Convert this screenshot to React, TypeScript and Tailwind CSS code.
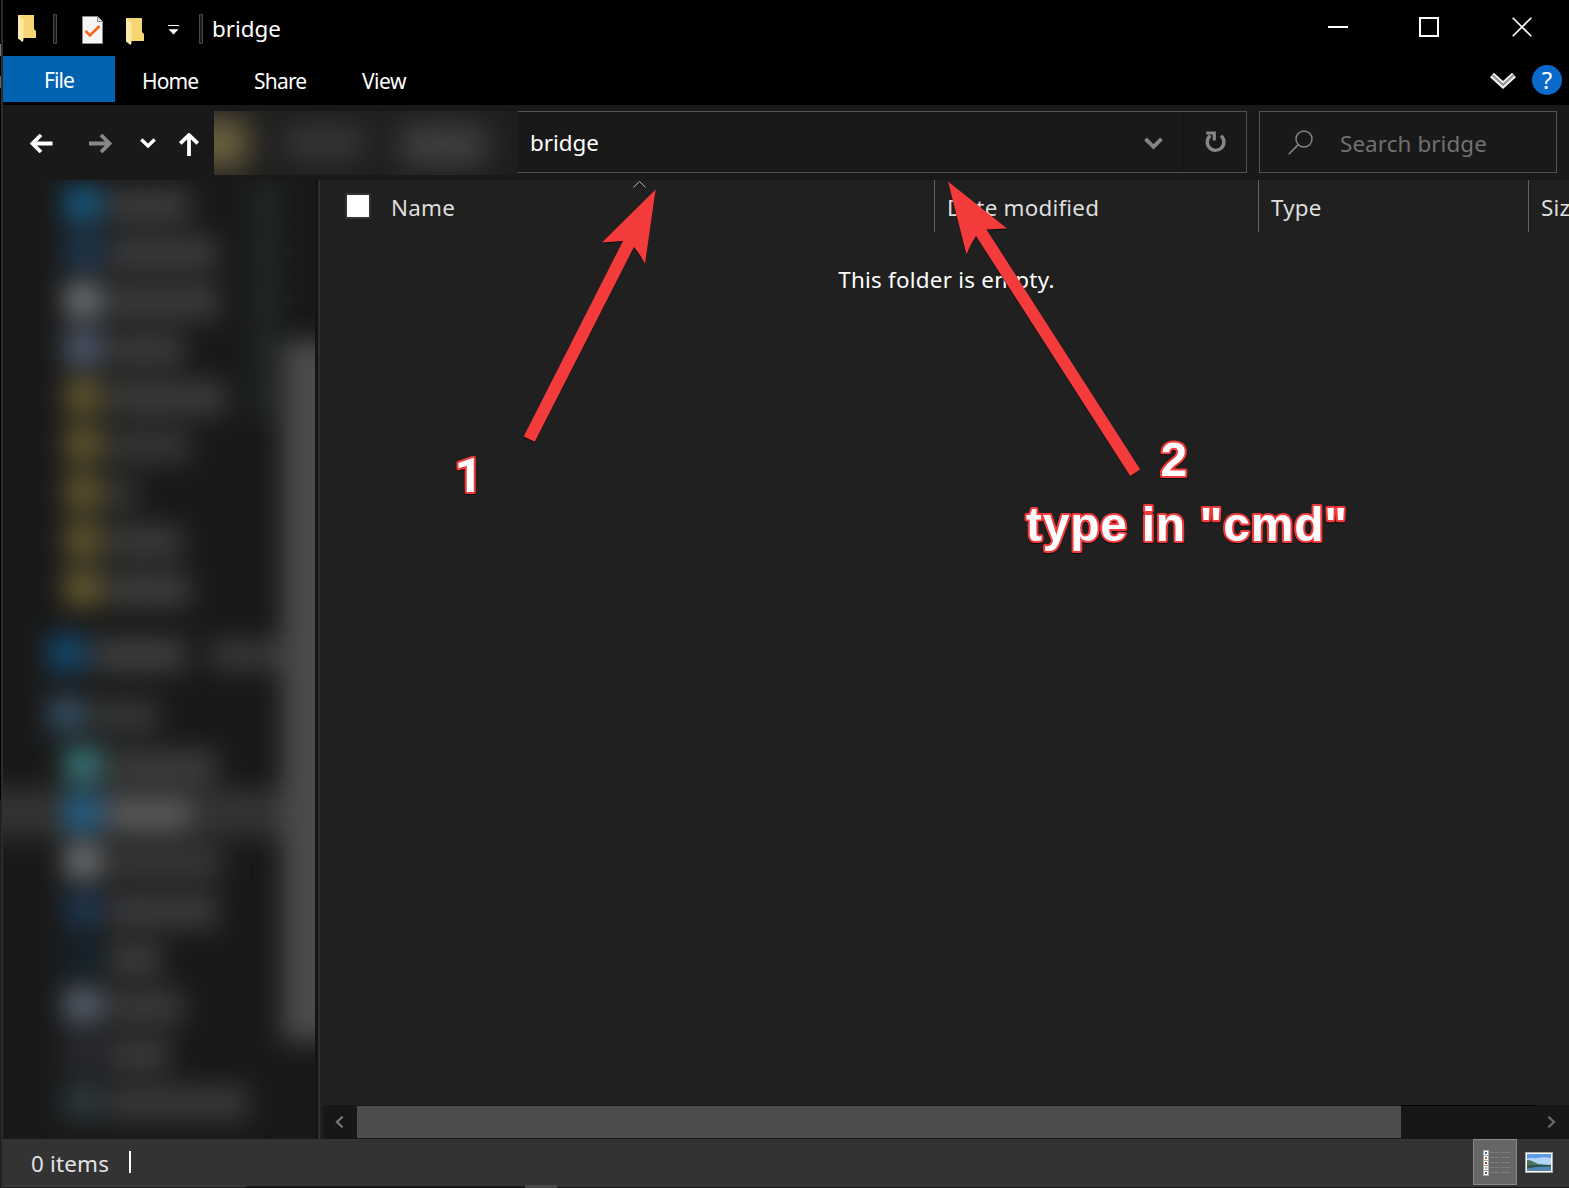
import React from "react";

type Row = { icon: string; text: string; pin?: boolean; indent?: boolean; selected?: boolean; gap?: string };

const ROWS: Row[] = [
  { icon: "bg-[#17587e]", text: "w-[82px] bg-[#3c3c3c]", pin: true },
  { icon: "bg-[#1e384f]", text: "w-[110px] bg-[#3b3b3b]", pin: true },
  { icon: "bg-[#6b7074]", text: "w-[112px] bg-[#3b3b3b]", pin: true },
  { icon: "bg-[#4d586c]", text: "w-[76px] bg-[#3a3a3a]", pin: true },
  { icon: "bg-[#62552f]", text: "w-[118px] bg-[#3b3b3b]", pin: true },
  { icon: "bg-[#62552f]", text: "w-[82px] bg-[#353535]" },
  { icon: "bg-[#62552f]", text: "w-[28px] bg-[#363636]" },
  { icon: "bg-[#62552f]", text: "w-[74px] bg-[#3a3a3a]" },
  { icon: "bg-[#665930]", text: "w-[82px] bg-[#3d3d3d]" },
  { icon: "bg-[#144a70]", text: "w-[94px] bg-[#3e3e3e]", indent: true, gap: "mt-[17px]" },
  { icon: "bg-[#344d60]", text: "w-[66px] bg-[#363636]", indent: true, gap: "mt-[13px]" },
  { icon: "bg-[#387377]", text: "w-[108px] bg-[#3c3c3c]", gap: "mt-[3px]" },
  { icon: "bg-[#235f88]", text: "w-[82px] bg-[#595959]", selected: true },
  { icon: "bg-[#6b6e70]", text: "w-[114px] bg-[#373737]" },
  { icon: "bg-[#1e3750]", text: "w-[110px] bg-[#3b3b3b]" },
  { icon: "bg-[#14242e]", text: "w-[54px] bg-[#3b3b3b]" },
  { icon: "bg-[#57606f]", text: "w-[76px] bg-[#3a3a3a]" },
  { icon: "bg-[#292b33]", text: "w-[62px] bg-[#3a3a3a]" },
  { icon: "bg-[#2e3a3e]", text: "w-[140px] bg-[#393939]" },
];

const Folder = () => (
  <svg width="20" height="28" viewBox="0 0 20 28">
    <path d="M1 0H17V14L19 16V23H5L1 22Z" fill="#f6d673" />
    <path d="M1 0L6.5 4.5V25L5.5 27L1 23.5Z" fill="#ffe9a6" />
  </svg>
);

const Separator = () => <div className="h-[30px] w-1 rounded-[1px] border border-[#4a4a4a] bg-[#1a1a1a]" />;

function TitleBar() {
  return (
    <div className="flex h-14 bg-black">
      <div className="flex items-center">
        <div className="ml-3.5 w-5 pt-px"><Folder /></div>
        <div className="ml-4 pt-0.5"><Separator /></div>
        <svg className="mt-1 ml-[25px]" width="21" height="28" viewBox="0 0 21 28">
          <path d="M.5 .5H15.5L20.5 5.5V27.5H.5Z" fill="#f5f5f7" stroke="#8c8c8c" />
          <path d="M15.5 .5V5.5H20.5" fill="#ddd" stroke="#8c8c8c" />
          <path d="M3.5 15L8 19.5L17.5 10" fill="none" stroke="#f9661b" strokeWidth="2.6" />
        </svg>
        <div className="mt-[7px] ml-[22px] w-5"><Folder /></div>
        <svg className="mt-[3px] ml-[23px]" width="11" height="10" viewBox="0 0 11 10">
          <path d="M0 .5H11" stroke="#fff" />
          <path d="M.5 4.3H10.5L5.5 9.6Z" fill="#fff" />
        </svg>
        <div className="ml-5 pt-0.5"><Separator /></div>
        <span className="mt-0.5 ml-[9px] text-[22.4px] text-white">bridge</span>
      </div>
      <div className="ml-auto flex items-center pb-0.5">
        <svg className="mr-[71px]" width="20" height="20"><path d="M0 10H20" stroke="#fff" strokeWidth="2" /></svg>
        <svg className="mr-[73px]" width="20" height="20"><rect x="1" y="1" width="18" height="18" fill="none" stroke="#fff" strokeWidth="2" /></svg>
        <svg className="mr-[37px]" width="20" height="20"><path d="M.7 .7L19.3 19.3M19.3 .7L.7 19.3" stroke="#fff" strokeWidth="1.6" /></svg>
      </div>
    </div>
  );
}

function Ribbon() {
  return (
    <div className="flex h-[49px] bg-black text-[21px] tracking-[-0.9px] text-white">
      <div className="flex h-[46px] w-28 items-center justify-center bg-[#0063b1] pt-[3px]">File</div>
      <div className="flex items-center pt-0.5">
        <span className="ml-[27px] w-[56px]">Home</span>
        <span className="ml-[56px] w-[54px] tracking-[-0.8px]">Share</span>
        <span className="ml-[54px] tracking-[-0.5px]">View</span>
      </div>
      <div className="ml-auto flex items-center pr-[7px]">
        <svg width="26" height="17" viewBox="0 0 26 17">
          <path d="M2 3L13 13L24 3" fill="none" stroke="#f4f4f4" strokeWidth="5.8" />
          <path d="M2.5 3.3L13 12.9L23.5 3.3" fill="none" stroke="#969696" strokeWidth="2.2" />
        </svg>
        <div className="mb-0.5 ml-4 flex size-[30px] items-center justify-center rounded-full bg-[#0a6acb] text-[24px] tracking-normal">?</div>
      </div>
    </div>
  );
}

function AddressBar() {
  return (
    <div className="flex h-[75px] bg-[#191919] pt-1.5">
      <div className="flex h-[64px] w-[211px] items-center">
        <svg className="ml-[27px]" width="23" height="19" viewBox="0 0 23 19">
          <path d="M2 9.5H22.5M11 1L2.5 9.5L11 18" fill="none" stroke="#fff" strokeWidth="3.8" />
        </svg>
        <svg className="ml-9" width="23" height="19" viewBox="0 0 23 19">
          <path d="M0 9.5H21M12 1L20.5 9.5L12 18" fill="none" stroke="#878787" strokeWidth="3.8" />
        </svg>
        <svg className="ml-7" width="16" height="11" viewBox="0 0 16 11">
          <path d="M1.3 1.5L8 8L14.7 1.5" fill="none" stroke="#fff" strokeWidth="3.4" />
        </svg>
        <svg className="mt-0.5 ml-[23px]" width="20" height="23" viewBox="0 0 20 23">
          <path d="M10 23V2M1.3 10.5L10 2L18.7 10.5" fill="none" stroke="#fff" strokeWidth="3.8" />
        </svg>
      </div>
      <div className="h-[64px] w-[304px] overflow-hidden bg-[#1e1e1e]">
        <div className="-ml-8 flex h-full items-center blur-[15px]">
          <div className="h-[50px] w-[66px] bg-[#6d6040]" />
          <div className="ml-9 h-[34px] w-[80px] bg-[#383838]" />
          <div className="mt-1 ml-9 h-[40px] w-[86px] bg-[#414141]" />
        </div>
      </div>
      <div className="flex h-[62px] w-[729px] items-center border border-l-0 border-[#535353] text-white">
        <span className="mt-0.5 ml-3 text-[22.4px]">bridge</span>
        <svg className="mt-0.5 ml-auto" width="19" height="13" viewBox="0 0 19 13">
          <path d="M1.5 1.8L9.5 9.8L17.5 1.8" fill="none" stroke="#858585" strokeWidth="3.8" />
        </svg>
        <div className="ml-5 h-full w-px bg-[#141414]" />
        <svg className="mr-5 ml-[21px]" width="21" height="22" viewBox="0 0 21 22">
          <path d="M16 4.8A8.3 8.3 0 1 1 5.4 4.6" fill="none" stroke="#878787" strokeWidth="3.4" />
          <path d="M1.2 2H9.3V9.5" fill="none" stroke="#878787" strokeWidth="3.2" />
        </svg>
      </div>
      <div className="ml-3 flex h-[62px] w-[298px] items-center border border-[#535353]">
        <svg className="ml-7" width="25" height="25" viewBox="0 0 25 25">
          <circle cx="16" cy="9" r="8" fill="none" stroke="#858585" strokeWidth="1.5" />
          <path d="M10.3 14.6L.7 24.2" stroke="#858585" strokeWidth="1.6" />
        </svg>
        <span className="mt-1 ml-[27px] text-[22.4px] tracking-[0.1px] text-[#717171]">Search bridge</span>
      </div>
    </div>
  );
}

function Sidebar() {
  return (
    <div className="relative w-[312px] shrink-0 overflow-hidden bg-[#191919]">
      <div className="blur-[13px]">
        {ROWS.map((row, i) => (
          <div key={i} className={`-mx-12 flex h-12 items-center pl-12 ${row.gap ?? ""} ${row.selected ? "bg-[#333333]" : ""}`}>
            <div className={`h-[36px] w-[38px] shrink-0 ${row.indent ? "ml-[45px]" : "ml-[61px]"} ${row.icon}`} />
            <div className={`mt-1 ml-1.5 h-[34px] shrink-0 ${row.text}`} />
            {i === 9 && <div className="mt-1 ml-6 h-[30px] w-[90px] bg-[#383838]" />}
            {row.pin && <div className="mr-[85px] ml-auto h-[44px] w-[24px] bg-[#252a2b]" />}
          </div>
        ))}
      </div>
      <div className="absolute top-[161px] left-[279px] h-[700px] w-[100px] bg-[#4b4b4b] blur-[13px]" />
    </div>
  );
}

function FilePane() {
  return (
    <div className="flex min-w-0 flex-1 flex-col bg-[#202020]">
      <div className="relative flex h-[52px] overflow-hidden text-[22.4px] tracking-[0.22px] whitespace-nowrap text-[#dedede]">
        <div className="flex w-[615px] shrink-0 items-center border-r border-[#636363] pt-1">
          <div className="ml-[25px] size-[26px] -translate-y-0.5 border-2 border-[#333333] bg-white" />
          <span className="ml-5">Name</span>
        </div>
        <div className="flex w-[324px] shrink-0 items-center border-r border-[#636363] pt-1 pl-3">Date modified</div>
        <div className="flex w-[270px] shrink-0 items-center border-r border-[#636363] pt-1 pl-3">Type</div>
        <div className="flex items-center pt-1 pl-3">Size</div>
        <svg className="absolute top-px left-[313px]" width="13" height="7" viewBox="0 0 13 7">
          <path d="M.4 6.3L6.5 .5L12.6 6.3" fill="none" stroke="#b5b5b5" strokeWidth="1" />
        </svg>
      </div>
      <div className="flex-1 pt-[31px] pl-1 text-center text-[22.4px] leading-[34px] tracking-[0.24px] text-white">This folder is empty.</div>
      <div className="ml-[3px] flex h-[34px] items-center bg-[#171717]">
        <svg className="ml-3" width="9" height="12" viewBox="0 0 9 12">
          <path d="M7.6 .7L2 6L7.6 11.3" fill="none" stroke="#777" strokeWidth="2.2" />
        </svg>
        <div className="ml-[13px] h-8 w-[1044px] bg-[#4d4d4d]" />
        <div className="h-full w-[134px] border-t border-black" />
        <svg className="ml-3" width="9" height="12" viewBox="0 0 9 12">
          <path d="M1.4 .7L7 6L1.4 11.3" fill="none" stroke="#6c6c6c" strokeWidth="2.2" />
        </svg>
      </div>
    </div>
  );
}

const DETAIL_DOTS = ["#3d6d83", "#8b8530", "#b03a1e", "#a5a5a5", "#3f6270"];

function StatusBar() {
  return (
    <div className="flex h-[46px] items-center bg-[#333333]">
      <span className="mt-1 ml-7 text-[22.4px] tracking-[0.2px] text-[#e2e2e2]">0 items</span>
      <div className="ml-5 h-[22px] w-0.5 bg-white" />
      <div className="ml-auto flex h-full w-11 items-center justify-center border border-[#8a8a8a] bg-[#666666]">
        <svg className="mt-0.5 ml-1" width="28" height="27" viewBox="0 0 28 27">
          <rect x=".5" y=".5" width="5" height="25" fill="#fff" stroke="#b5a8a8" />
          {DETAIL_DOTS.map((c, i) => (
            <g key={c}>
              <rect x="2" y={2 + i * 5} width="2" height="2" fill={c} />
              <path d={`M1 ${5.5 + i * 5}H5`} stroke="#aaa" strokeWidth="1" />
              <path d={`M7 ${2.5 + i * 5}H16M18 ${2.5 + i * 5}H27`} stroke="#7c7c7c" />
            </g>
          ))}
        </svg>
      </div>
      <svg className="mr-4 ml-2" width="28" height="21" viewBox="0 0 28 21">
        <rect x=".5" y=".5" width="27" height="20" fill="#fff" stroke="#aaa" />
        <rect x="2" y="2" width="24" height="17" fill="#5c9be8" />
        <path d="M2 7C6 5 9 7 13 6S22 5 26 6V14H2Z" fill="#b4d6f6" />
        <path d="M2 8C6 8 9 10 13 12L26 13V14H2Z" fill="#47735f" />
        <path d="M2 14H26V19H2Z" fill="#5286b4" />
        <path d="M2 13H26V14.5L12 15L2 16.5Z" fill="#2c5653" />
      </svg>
    </div>
  );
}

function Annotations() {
  return (
    <svg className="pointer-events-none absolute inset-0 drop-shadow-[0.5px_1px_0.5px_rgba(0,0,0,0.7)]" width="1569" height="1188">
      <g fill="#f43b3b">
        <path d="M655.7 189.5L602 242.5L623 241L523.7 436.5L534.8 441.8L634 247Q640 254 645 264Z" />
        <path d="M948 181.5L966.5 254.5Q970 245 976 236L1130.2 476L1140.2 469.5L986.5 229.5L1007 228.5Z" />
      </g>
      <g className="font-['Liberation_Sans',Arial,sans-serif] font-bold" fontSize="48" fill="#fff" stroke="#f43b3b" strokeWidth="4.2" strokeLinejoin="round" paintOrder="stroke">
        <text className="font-[Roboto,sans-serif]" x="454.5" y="491.5" fontSize="49">1</text>
        <text x="1160.5" y="475.5">2</text>
        <text x="1026" y="540.5" textLength="321">type in "cmd"</text>
      </g>
    </svg>
  );
}

export default function App() {
  return (
    <div className="relative flex h-[1188px] w-[1569px] overflow-hidden bg-black font-['Noto_Sans','Open_Sans',sans-serif]">
      <div className="flex w-[3px] shrink-0 flex-col border-r-2 border-[#2b2b2b]">
        <div className="mt-11 h-3 w-px bg-[#777]" />
        <div className="mt-5 h-3 w-px bg-[#666]" />
        <div className="mt-auto h-[388px] w-px bg-[#1c1c1c]" />
      </div>
      <div className="flex min-w-0 flex-1 flex-col">
        <TitleBar />
        <Ribbon />
        <AddressBar />
        <div className="flex min-h-0 flex-1">
          <Sidebar />
          <div className="w-[5px] shrink-0 border-r-2 border-[#2e2e2e] bg-[#141414]" />
          <FilePane />
        </div>
        <StatusBar />
        <div className="flex h-[3px] bg-[#333333]">
          <div className="w-[243px] border-b border-[#1e1e1e] bg-[#383838]" />
          <div className="mt-px w-[279px] bg-[#181818]" />
          <div className="w-8 bg-[#474747]" />
          <div className="mt-0.5 flex-1 bg-[#181818]" />
        </div>
      </div>
      <Annotations />
    </div>
  );
}
